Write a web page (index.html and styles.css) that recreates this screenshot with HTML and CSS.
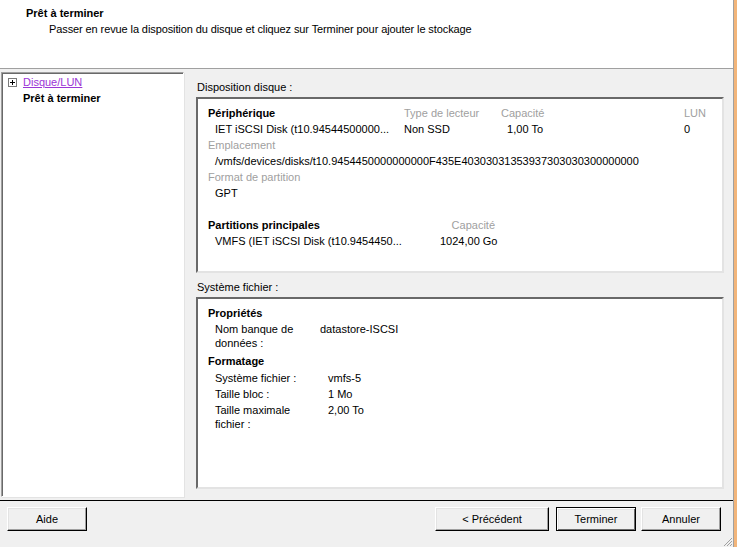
FILE: index.html
```html
<!DOCTYPE html>
<html lang="fr">
<head>
  <meta charset="UTF-8" />
  <title>Ajouter stockage</title>
  <link rel="stylesheet" href="styles.css">
</head>
<body>
  <div class="dialog">
    <div class="header">
      <div class="header-title">Prêt à terminer</div>
      <div class="header-sub">Passer en revue la disposition du disque et cliquez sur Terminer pour ajouter le stockage</div>
    </div>

    <div class="content">
      <div class="tree">
        <div class="tree-item">
          <svg class="expander" width="9" height="9" viewBox="0 0 9 9">
            <rect x="0.5" y="0.5" width="8" height="8" fill="#fff" stroke="#7a7a7a"/>
            <path d="M2 4.5h5M4.5 2v5" stroke="#000" stroke-width="1"/>
          </svg>
          <a href="#" class="tree-link">Disque/LUN</a>
        </div>
        <div class="tree-item current">Prêt à terminer</div>
      </div>

      <div class="details">
        <div class="group-label">Disposition disque :</div>
        <div class="panel panel-disk">
          <div class="grid-device">
            <div class="bold">Périphérique</div>
            <div class="muted">Type de lecteur</div>
            <div class="muted right">Capacité</div>
            <div></div>
            <div class="muted">LUN</div>

            <div class="indent">IET iSCSI Disk (t10.94544500000...</div>
            <div>Non SSD</div>
            <div class="right">1,00 To</div>
            <div></div>
            <div>0</div>
          </div>
          <div class="muted">Emplacement</div>
          <div class="indent">/vmfs/devices/disks/t10.9454450000000000F435E40303031353937303030300000000</div>
          <div class="muted">Format de partition</div>
          <div class="indent">GPT</div>

          <div class="grid-part">
            <div class="bold">Partitions principales</div>
            <div class="muted right">Capacité</div>
            <div class="indent">VMFS (IET iSCSI Disk (t10.9454450...</div>
            <div class="right">1024,00 Go</div>
          </div>
        </div>

        <div class="group-label second">Système fichier :</div>
        <div class="panel panel-fs">
          <div class="bold">Propriétés</div>
          <div class="grid-props props-name">
            <div>Nom banque de<br>données :</div>
            <div>datastore-ISCSI</div>
          </div>
          <div class="bold">Formatage</div>
          <div class="grid-props props-format">
            <div>Système fichier :</div>
            <div>vmfs-5</div>
            <div>Taille bloc :</div>
            <div>1 Mo</div>
            <div>Taille maximale<br>fichier :</div>
            <div>2,00 To</div>
          </div>
        </div>
      </div>
    </div>

    <div class="footer">
      <button class="btn">Aide</button>
      <div class="footer-right">
        <button class="btn btn-wide">&lt; Précédent</button>
        <button class="btn btn-default">Terminer</button>
        <button class="btn btn-last">Annuler</button>
      </div>
      <svg class="grip" width="11" height="11" viewBox="0 0 11 11">
        <path d="M10 2L2 10M10 5L5 10M10 8L8 10" stroke="#a0a0a0" stroke-width="1"/>
      </svg>
    </div>
  </div>
  <div class="frame-edge"></div>
</body>
</html>
```

FILE: styles.css
```css
body {
  margin: 0;
  width: 737px;
  height: 547px;
  overflow: hidden;
  display: flex;
  font-family: "Liberation Sans", Arial, sans-serif;
  font-size: 11px;
  color: #000;
  background: #f0f0f0;
}
.dialog {
  position: relative;
  width: 733px;
  height: 547px;
  border-right: 1px solid #a0a0a0;
  display: flex;
  flex-direction: column;
  background: #f0f0f0;
}
.frame-edge {
  width: 3px;
  background: #f2b57a;
}
.header {
  height: 69px;
  flex-shrink: 0;
  background: #fff;
  border-bottom: 1px solid #a0a0a0;
  box-sizing: border-box;
  padding: 6px 0 0 26px;
  white-space: nowrap;
}
.header-title {
  font-weight: bold;
  line-height: 14px;
}
.header-sub {
  margin: 2px 0 0 23px;
  line-height: 14px;
  letter-spacing: -0.1px;
}
.content {
  display: flex;
  height: 428px;
  flex-shrink: 0;
  padding-top: 3px;
  box-sizing: border-box;
  white-space: nowrap;
}
.tree {
  width: 183px;
  height: 425px;
  margin-left: 1px;
  box-sizing: border-box;
  background: #fff;
  border-top: 1px solid #a0a0a0;
  border-left: 1px solid #a0a0a0;
  border-bottom: 1px solid #fff;
  border-right: 1px solid #fff;
  box-shadow: inset 1px 1px 0 #696969, 1px 1px 0 #e3e3e3;
  padding: 1px 0 0 6px;
}
.tree-item {
  display: flex;
  align-items: center;
  height: 16px;
  line-height: 16px;
}
.expander {
  margin-right: 6px;
}
.tree-link {
  color: #9b36d6;
  text-decoration: underline;
}
.tree-item.current {
  font-weight: bold;
  padding-left: 15px;
}
.details {
  margin-left: 12px;
  width: 528px;
  display: flex;
  flex-direction: column;
}
.group-label {
  height: 25px;
  line-height: 14px;
  padding: 8px 0 0 1px;
  box-sizing: border-box;
}
.group-label.second {
  height: 24px;
  padding-top: 7px;
}
.panel {
  background: #fff;
  box-sizing: border-box;
  border-top: 2px solid #696969;
  border-left: 2px solid #696969;
  border-right: 2px solid #e3e3e3;
  border-bottom: 2px solid #e3e3e3;
  padding: 6px 10px 0 10px;
  line-height: 16px;
}
.panel-disk {
  height: 176px;
}
.panel-fs {
  height: 192px;
}
.bold {
  font-weight: bold;
}
.muted {
  color: #a0a0a0;
}
.right {
  text-align: right;
}
.indent {
  padding-left: 7px;
}
.grid-device {
  display: grid;
  grid-template-columns: 196px 97px 42px 141px auto;
}
.grid-part {
  display: grid;
  grid-template-columns: 232px 55px;
  margin-top: 16px;
}
.grid-props {
  display: grid;
  padding-left: 7px;
  line-height: 14px;
}
.props-name {
  grid-template-columns: 105px auto;
  margin: 1px 0 3px;
}
.props-format {
  grid-template-columns: 113px auto;
  row-gap: 2px;
  margin-top: 2px;
}
.footer {
  flex: 1;
  border-top: 1px solid #000;
  margin-top: 3px;
  display: flex;
  justify-content: space-between;
  padding: 6px 12px 0 7px;
}
.footer-right {
  display: flex;
}
.btn {
  width: 80px;
  height: 24px;
  font-family: inherit;
  font-size: 11px;
  background: #f0f0f0;
  border-top: 1px solid #fff;
  border-left: 1px solid #fff;
  border-right: 1px solid #000;
  border-bottom: 1px solid #000;
  box-shadow: inset -1px -1px 0 #a0a0a0, inset 1px 1px 0 #e3e3e3;
  padding: 0;
  color: #000;
}
.btn-wide {
  width: 114px;
  margin-right: 7px;
}
.btn-default {
  border: 1px solid #000;
  box-shadow: inset 1px 1px 0 #fff, inset -1px -1px 0 #696969, inset 2px 2px 0 #e3e3e3;
}
.btn-last {
  margin-left: 5px;
}
.grip {
  position: absolute;
  right: 0;
  bottom: 0;
}
```
